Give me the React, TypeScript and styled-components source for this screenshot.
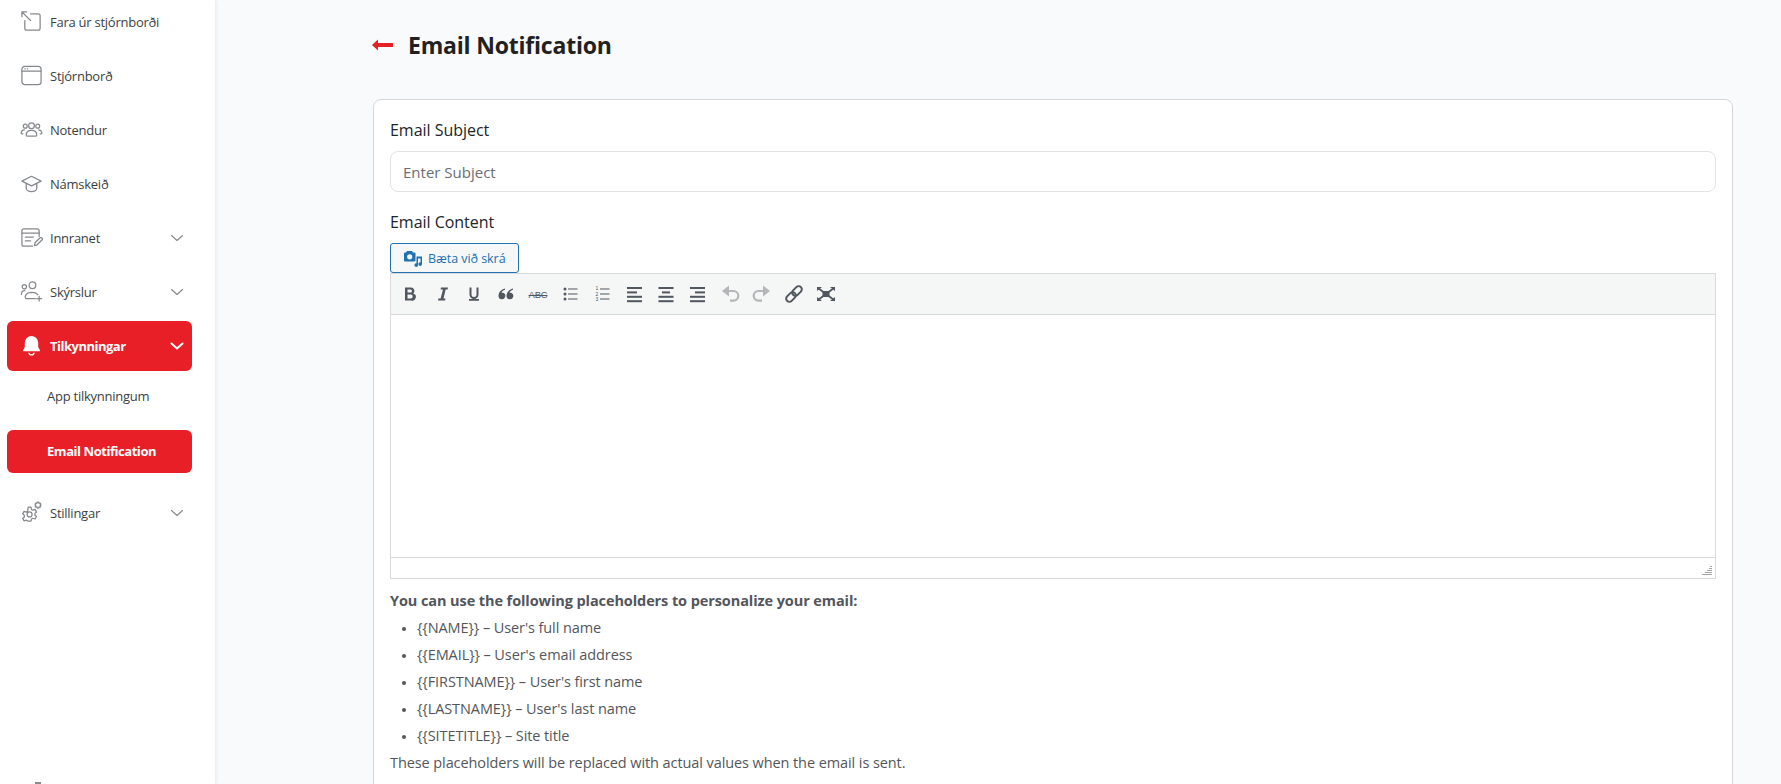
import React from "react";
import styled, { createGlobalStyle } from "styled-components";

const Global = createGlobalStyle`
  html, body { margin: 0; padding: 0; height: 100%; background: #f9fafc; }
  body { font-family: "Open Sans", "Noto Sans", sans-serif; color: #212529; }
  * { box-sizing: border-box; }
`;

const Page = styled.div`
  display: flex;
  height: 784px;
  overflow: hidden;
`;

const Sidebar = styled.aside`
  width: 215px;
  flex: none;
  display: flex;
  flex-direction: column;
  height: 784px;
  overflow: hidden;
  background: #fff;
  box-shadow: 1px 0 4px rgba(0, 0, 0, 0.08);
  z-index: 1;
`;

const Nav = styled.nav`
  flex: 1;
  display: flex;
  flex-direction: column;
  gap: 4px;
  margin-top: -3px;
  padding: 0 23px 0 7px;
`;

const NavItem = styled.div<{ $active?: boolean }>`
  height: 50px;
  flex: none;
  display: flex;
  align-items: center;
  gap: 7px;
  padding: 0 8px 1px 13px;
  border-radius: 6px;
  font-size: 13px;
  letter-spacing: ${(p) => (p.$active ? "-0.5px" : "-0.25px")};
  font-weight: ${(p) => (p.$active ? 700 : 400)};
  color: ${(p) => (p.$active ? "#fff" : "#3b3f44")};
  background: ${(p) => (p.$active ? "#e81f26" : "transparent")};
`;

const NavLabel = styled.span`
  flex: 1;
`;

const SubItem = styled.div<{ $active?: boolean }>`
  height: 43px;
  flex: none;
  display: flex;
  align-items: center;
  padding: 0 0 1px 40px;
  border-radius: 6px;
  font-size: 13px;
  letter-spacing: ${(p) => (p.$active ? "-0.45px" : "-0.25px")};
  font-weight: ${(p) => (p.$active ? 700 : 400)};
  color: ${(p) => (p.$active ? "#fff" : "#3b3f44")};
  background: ${(p) => (p.$active ? "#e81f26" : "transparent")};
`;

const SubGroup = styled.div`
  display: flex;
  flex-direction: column;
  gap: 12px;
  margin-bottom: 11px;
`;

const FooterMark = styled.div`
  flex: none;
  width: 6px;
  height: 2px;
  margin-left: 35px;
  background: #8a8a8a;
`;

const IconSvg = styled.svg.attrs({ viewBox: "0 0 24 24", fill: "none" })`
  width: 23px;
  height: 23px;
  flex: none;
  stroke: #85888c;
  stroke-width: 1.3;
  stroke-linecap: round;
  stroke-linejoin: round;
`;

const BellSvg = styled.svg.attrs({ viewBox: "0 0 24 24" })`
  width: 23px;
  height: 23px;
  flex: none;
  fill: #fff;
`;

const Chevron = styled.svg.attrs({ viewBox: "0 0 14 14", fill: "none" }) <{ $active?: boolean }>`
  width: 14px;
  height: 14px;
  flex: none;
  stroke: ${(p) => (p.$active ? "#fff" : "#85888c")};
  stroke-width: ${(p) => (p.$active ? 2 : 1.1)};
  stroke-linecap: round;
  stroke-linejoin: round;
`;

const Main = styled.main`
  flex: 1;
  min-width: 0;
  padding: 0 48px 0 158px;
`;

const Header = styled.header`
  height: 99px;
  padding-bottom: 10px;
  display: flex;
  align-items: center;
  gap: 15px;
`;

const BackArrow = styled.svg.attrs({ viewBox: "0 0 21 12" })`
  width: 21px;
  height: 12px;
  margin-left: -1px;
  flex: none;
  fill: #e81f26;
`;

const Title = styled.h1`
  margin: 0;
  font-size: 23px;
  line-height: 30px;
  font-weight: 700;
  letter-spacing: -0.2px;
  color: #212121;
`;

const Card = styled.section`
  background: #fff;
  border: 1px solid #d6d6d8;
  border-radius: 8px;
  padding: 16px 16px 60px;
  min-height: 760px;
`;

const FieldLabel = styled.label`
  display: block;
  font-size: 16px;
  line-height: 28px;
  letter-spacing: -0.03px;
  color: #212529;
`;

const SubjectInput = styled.input`
  display: block;
  width: 100%;
  height: 41px;
  margin: 7px 0 16px;
  padding: 0 12px;
  border: 1px solid #e2e2e4;
  border-radius: 8px;
  background: #fff;
  font: 400 15px "Open Sans", sans-serif;
  &::placeholder { color: #6a6d73; opacity: 1; }
`;

const MediaButton = styled.button`
  display: flex;
  align-items: center;
  gap: 6px;
  width: 129px;
  height: 30px;
  margin-top: 7px;
  padding: 0 0 0 13px;
  border: 1px solid #2271b1;
  border-radius: 3px;
  background: #f6f7f7;
  color: #2271b1;
  font: 400 12.5px "Open Sans", sans-serif;
  letter-spacing: -0.05px;
`;

const MediaIcon = styled.svg.attrs({ viewBox: "0 0 18 18" })`
  width: 18px;
  height: 18px;
  flex: none;
  fill: #2271b1;
  fill-rule: evenodd;
`;

const Editor = styled.div`
  border: 1px solid #d9dadb;
`;

const Toolbar = styled.div`
  height: 41px;
  display: flex;
  align-items: center;
  padding-left: 3px;
  background: #f5f6f6;
  border-bottom: 1px solid #d9dadb;
`;

const ToolButton = styled.div<{ $disabled?: boolean }>`
  width: 32px;
  height: 32px;
  display: flex;
  align-items: center;
  justify-content: center;
  color: ${(p) => (p.$disabled ? "#b4b6b8" : "#50575e")};
`;

const ToolSvg = styled.svg.attrs({ viewBox: "0 0 24 24" })`
  width: 24px;
  height: 24px;
  fill: currentColor;
  fill-rule: evenodd;
`;

const ToolStroke = styled.path<{ $w?: number }>`
  fill: none;
  stroke: currentColor;
  stroke-width: ${(p) => p.$w ?? 2};
`;

const StrikeText = styled.span`
  font: 400 9.5px "Liberation Sans", sans-serif;
  letter-spacing: -0.2px;
  text-decoration: line-through;
`;

const EditArea = styled.div`
  height: 242px;
  background: #fff;
`;

const StatusBar = styled.div`
  height: 21px;
  display: flex;
  justify-content: flex-end;
  align-items: flex-end;
  padding: 0 3px 3px 0;
  border-top: 1px solid #d9dadb;
`;

const Grip = styled.svg.attrs({ viewBox: "0 0 10 9" })`
  width: 10px;
  height: 9px;
  fill: #a5a5a5;
`;

const Help = styled.div`
  font-size: 14.5px;
  line-height: 27px;
  letter-spacing: -0.09px;
  color: #53565b;
  padding-top: 8px;
`;

const HelpTitle = styled.div`
  font-weight: 700;
`;

const HelpList = styled.ul`
  margin: 0;
  padding-left: 27px;
  li::marker { font-size: 12px; }
`;

const ListText = styled.text`
  font: 400 5px "Liberation Sans", sans-serif;
`;

const ICONS = {
  exit: (
    <IconSvg>
      <path d="M11 4h8a2 2 0 0 1 2 2v13a2 2 0 0 1-2 2H7a2 2 0 0 1-2-2v-8" />
      <path d="M2 2l9 9M2 2v5M2 2h5" />
    </IconSvg>
  ),
  window: (
    <IconSvg>
      <rect x="2" y="2.5" width="20" height="19" rx="3" />
      <path d="M2 7.5h20M5 5h.5M7.5 5h.5" />
    </IconSvg>
  ),
  users: (
    <IconSvg>
      <circle cx="12" cy="8" r="3" />
      <circle cx="5.5" cy="8.5" r="2" />
      <circle cx="18.5" cy="8.5" r="2" />
      <path d="M6.5 18c0-3.5 2-5 5.5-5s5.5 1.5 5.5 5c0 .8-1 1-2 1H8.5c-1 0-2-.2-2-1z" />
      <path d="M3 16.5H2c-.8 0-1-.6-.8-1.2.6-1.8 1.8-2.8 3.3-2.8M21 16.5h1c.8 0 1-.6.8-1.2-.6-1.8-1.8-2.8-3.3-2.8" />
    </IconSvg>
  ),
  cap: (
    <IconSvg>
      <path d="M12 4.5 22 9.5l-10 5-10-5z" />
      <path d="M6.5 12v5c0 2 2.5 3.5 5.5 3.5s5.5-1.5 5.5-3.5v-5" />
    </IconSvg>
  ),
  intranet: (
    <IconSvg>
      <path d="M20 11V5a2 2 0 0 0-2-2H4a2 2 0 0 0-2 2v14a2 2 0 0 0 2 2h9" />
      <path d="M2 7.5h18M5.5 11.5H14M5.5 15.5H11" />
      <path d="M15 20.5l.7-3 5-5a1.5 1.5 0 0 1 2.2 2.1l-5 5z" />
    </IconSvg>
  ),
  reports: (
    <IconSvg>
      <circle cx="13" cy="5.5" r="3.5" />
      <circle cx="4.5" cy="7" r="2.3" />
      <path d="M1.5 15c0-2.5 1.2-3.8 3.5-3.8M7 19.5c-1.5-.3-1.8-1.5-1.3-3 .8-2.5 3.5-3.5 7-3.5 2.5 0 4.5.7 5.8 2.3M7 19.5h9" />
      <path d="M20 17v5M17.5 19.5h5" />
    </IconSvg>
  ),
  bell: (
    <BellSvg>
      <path d="M12 2a7 7 0 0 0-7 7v4.5L3.3 16.6c-.4.8.1 1.4 1 1.4h15.400c.9 0 1.400-.6 1-1.400L19 13.500V9a7 7 0 0 0-7-7z" />
      <path d="M8.500 19.500h1.500c.3 1 1 1.300 2 1.300s1.700-.3 2-1.300h1.500c-.4 2-1.700 3-3.500 3s-3.100-1-3.500-3z" />
    </BellSvg>
  ),
  gear: (
    <IconSvg>
      <circle cx="10" cy="14" r="2.6" />
      <path d="M8.500 6.500h3l.5 2.300 1.500.8 2.200-.8 1.500 2.600-1.700 1.500v1.800l1.700 1.500-1.500 2.600-2.200-.8-1.500.8-.5 2.200h-3L8 20.800l-1.500-.8-2.200.8-1.500-2.600 1.700-1.500v-1.800l-1.700-1.500 1.500-2.600 2.200.8 1.500-.8z" />
      <path d="M18 1.200h1.500l.3 1.200 1.200-.3.800 1.300-.9.900.9.900-.8 1.300-1.200-.3-.3 1.200H18l-.3-1.200-1.200.3-.8-1.300.9-.9-.9-.9.8-1.300 1.200.3z" />
    </IconSvg>
  ),
};

const Down = ({ active }: { active?: boolean }) => (
  <Chevron $active={active}>
    <path d="M1.500 4.500 7 9.500l5.500-5" />
  </Chevron>
);

const AlignIcon = ({ rows }: { rows: [number, number][] }) => (
  <ToolSvg>
    {rows.map(([x, w], i) => (
      <rect key={i} x={x} y={5 + i * 4.4} width={w} height="2" />
    ))}
  </ToolSvg>
);

const quoteMark = "M11 6.500C7 7.500 4.500 10.500 4.500 14a3.400 3.400 0 1 0 4.700-3.200c-.6-.2-1.200-.2-1.700 0 .4-1.200 1.600-2.500 3.500-3z";

const ListLines = () => (
  <>
    <rect x="10" y="6.500" width="9.500" height="1" />
    <rect x="10" y="11.500" width="9.500" height="1" />
    <rect x="10" y="16.500" width="9.500" height="1" />
  </>
);

const UndoShape = () => (
  <>
    <path d="M4 9l7-5.500v11z" />
    <ToolStroke $w={2.2} d="M10 9h5.500a4.800 4.800 0 0 1 0 9.600H12" />
  </>
);

const GripRows = [
  [8, 2],
  [7, 3],
  [5, 5],
  [3, 7],
  [0, 10],
];

export default function App() {
  return (
    <Page>
      <Global />
      <Sidebar>
        <Nav>
          <NavItem>{ICONS.exit}<NavLabel>Fara úr stjórnborði</NavLabel></NavItem>
          <NavItem>{ICONS.window}<NavLabel>Stjórnborð</NavLabel></NavItem>
          <NavItem>{ICONS.users}<NavLabel>Notendur</NavLabel></NavItem>
          <NavItem>{ICONS.cap}<NavLabel>Námskeið</NavLabel></NavItem>
          <NavItem>{ICONS.intranet}<NavLabel>Innranet</NavLabel><Down /></NavItem>
          <NavItem>{ICONS.reports}<NavLabel>Skýrslur</NavLabel><Down /></NavItem>
          <NavItem $active>{ICONS.bell}<NavLabel>Tilkynningar</NavLabel><Down active /></NavItem>
          <SubGroup>
            <SubItem>App tilkynningum</SubItem>
            <SubItem $active>Email Notification</SubItem>
          </SubGroup>
          <NavItem>{ICONS.gear}<NavLabel>Stillingar</NavLabel><Down /></NavItem>
        </Nav>
        <FooterMark />
      </Sidebar>
      <Main>
        <Header>
          <BackArrow>
            <path d="M0 6 6 .5V4h15v4H6v3.500z" />
          </BackArrow>
          <Title>Email Notification</Title>
        </Header>
        <Card>
          <FieldLabel>Email Subject</FieldLabel>
          <SubjectInput placeholder="Enter Subject" />
          <FieldLabel>Email Content</FieldLabel>
          <MediaButton type="button">
            <MediaIcon>
              <path d="M3 2h5l1 1.500h1.500a1 1 0 0 1 1 1v7a1 1 0 0 1-1 1H1a1 1 0 0 1-1-1v-7a1 1 0 0 1 1-1h1zM5.700 5.200a2.600 2.600 0 1 0 0 5.200 2.600 2.600 0 0 0 0-5.200z" />
              <path d="M12.500 7.500H18V15a1.800 1.800 0 1 1-1.500-1.700V9.500H14V16a1.800 1.800 0 1 1-1.500-1.700z" />
            </MediaIcon>
            Bæta við skrá
          </MediaButton>
          <Editor>
            <Toolbar>
              <ToolButton>
                <ToolSvg>
                  <path d="M7 5.500h6a3.400 3.400 0 0 1 2.200 6A3.600 3.600 0 0 1 13.200 18.500H7zM9.500 7.500v3h3a1.500 1.500 0 0 0 0-3zM9.500 12.500v4h3.200a2 2 0 0 0 0-4z" />
                </ToolSvg>
              </ToolButton>
              <ToolButton>
                <ToolSvg>
                  <path d="M11 5.500h7l-.4 2h-2L13.500 16.500h2l-.4 2H8l.4-2h2.200L13 7.500h-2.400z" />
                </ToolSvg>
              </ToolButton>
              <ToolButton>
                <ToolSvg>
                  <path d="M7.500 5.500h2v7a2.500 2.500 0 0 0 5 0v-7h2v7a4.500 4.500 0 0 1-9 0zM7 17h10v1.700H7z" />
                </ToolSvg>
              </ToolButton>
              <ToolButton>
                <ToolSvg>
                  <path d={quoteMark} />
                  <path d={quoteMark} transform="translate(8 0)" />
                </ToolSvg>
              </ToolButton>
              <ToolButton><StrikeText>ABC</StrikeText></ToolButton>
              <ToolButton>
                <ToolSvg>
                  <circle cx="7" cy="7" r="1.500" />
                  <circle cx="7" cy="12" r="1.500" />
                  <circle cx="7" cy="17" r="1.500" />
                  <ListLines />
                </ToolSvg>
              </ToolButton>
              <ToolButton>
                <ToolSvg>
                  <ListText x="5.500" y="8">1</ListText>
                  <ListText x="5.500" y="13.500">2</ListText>
                  <ListText x="5.500" y="19">3</ListText>
                  <ListLines />
                </ToolSvg>
              </ToolButton>
              <ToolButton><AlignIcon rows={[[5, 15], [5, 10], [5, 15], [5, 15]]} /></ToolButton>
              <ToolButton><AlignIcon rows={[[4.500, 15], [8, 8], [4.500, 15], [4.500, 15]]} /></ToolButton>
              <ToolButton><AlignIcon rows={[[4, 15], [9, 10], [4, 15], [4, 15]]} /></ToolButton>
              <ToolButton $disabled><ToolSvg><UndoShape /></ToolSvg></ToolButton>
              <ToolButton $disabled>
                <ToolSvg>
                  <g transform="matrix(-1 0 0 1 24 0)"><UndoShape /></g>
                </ToolSvg>
              </ToolButton>
              <ToolButton>
                <ToolSvg>
                  <g fill="none" stroke="currentColor" strokeWidth="2">
                    <rect x="3.500" y="11.800" width="11" height="6.400" rx="3.200" transform="rotate(-45 9 15)" />
                    <rect x="9.500" y="5.800" width="11" height="6.400" rx="3.200" transform="rotate(-45 15 9)" />
                  </g>
                </ToolSvg>
              </ToolButton>
              <ToolButton>
                <ToolSvg>
                  <rect x="8.500" y="9" width="7" height="6" />
                  <ToolStroke $w={1.8} d="M4 6l16 12M20 6 4 18" />
                  <path d="M3 5h5L3 9zM21 5h-5l5 4zM3 19h5l-5-4zM21 19h-5l5-4z" />
                </ToolSvg>
              </ToolButton>
            </Toolbar>
            <EditArea />
            <StatusBar>
              <Grip>
                {GripRows.map(([x, w], i) => (
                  <rect key={i} x={x} y={i * 2} width={w} height="1" />
                ))}
              </Grip>
            </StatusBar>
          </Editor>
          <Help>
            <HelpTitle>You can use the following placeholders to personalize your email:</HelpTitle>
            <HelpList>
              <li>{"{{NAME}}"} – User's full name</li>
              <li>{"{{EMAIL}}"} – User's email address</li>
              <li>{"{{FIRSTNAME}}"} – User's first name</li>
              <li>{"{{LASTNAME}}"} – User's last name</li>
              <li>{"{{SITETITLE}}"} – Site title</li>
            </HelpList>
            These placeholders will be replaced with actual values when the email is sent.
          </Help>
        </Card>
      </Main>
    </Page>
  );
}
